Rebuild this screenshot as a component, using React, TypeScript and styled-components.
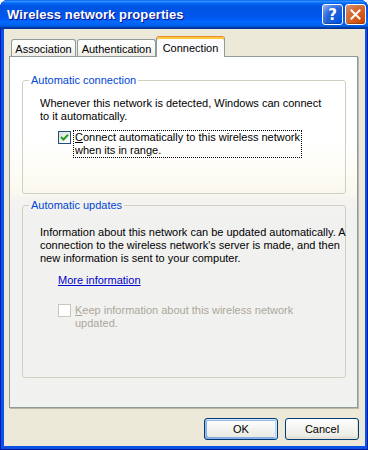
import styled, { createGlobalStyle } from "styled-components";

const GlobalStyle = createGlobalStyle`
  html, body {
    margin: 0;
    padding: 0;
    background: #ffffff;
  }
  body {
    font-family: "Liberation Sans", Arial, sans-serif;
    font-size: 11px;
    color: #000;
  }
`;

const Window = styled.div`
  width: 368px;
  height: 450px;
  box-sizing: border-box;
  display: flex;
  flex-direction: column;
  background: #0a52e6;
  border-radius: 8px 8px 0 0;
  overflow: hidden;
  box-shadow: inset 1px 0 #0019b5, inset -1px 0 #001ea0, inset 0 -1px #00138c;
`;

const TitleBar = styled.div`
  height: 29px;
  flex: none;
  display: flex;
  align-items: center;
  padding: 0 2px 0 7px;
  gap: 2px;
  background: linear-gradient(
    180deg,
    #0058ee 0%,
    #3593ff 4%,
    #288eff 6%,
    #127dff 8%,
    #036ffc 10%,
    #0262ee 14%,
    #0057e5 20%,
    #0054e3 24%,
    #0055eb 56%,
    #005bf5 66%,
    #026afe 76%,
    #0062ef 86%,
    #0052d6 92%,
    #0040ab 94%,
    #003092 100%
  );
`;

const Title = styled.span`
  flex: 1;
  font-family: "Liberation Sans", Arial, sans-serif;
  font-weight: 700;
  font-size: 13px;
  color: #fff;
  letter-spacing: 0.1px;
  text-shadow: 1px 1px #0f1089;
`;

const CaptionButton = styled.div<{ $kind: "help" | "close" }>`
  width: 21px;
  height: 21px;
  box-sizing: border-box;
  border: 1px solid #fff;
  border-radius: 3px;
  display: flex;
  align-items: center;
  justify-content: center;
  color: #fff;
  font-family: "DejaVu Sans", sans-serif;
  font-weight: 700;
  font-size: 15px;
  background: ${({ $kind }) =>
    $kind === "close"
      ? "radial-gradient(circle at 90% 90%, #cc4600 0%, #dc6527 55%, #cd7546 70%, #e39374 100%)"
      : "radial-gradient(circle at 90% 90%, #0054e9 0%, #2263d5 55%, #4479e4 70%, #a3bbec 100%)"};
  box-shadow: inset 0 -1px 1px rgba(0, 0, 0, 0.25);
`;

const Body = styled.div`
  flex: 1;
  display: flex;
  flex-direction: column;
  margin: 0 3px 4px 4px;
  padding: 7px 6px 6px 5px;
  background: #ece9d8;
`;

const TabStrip = styled.div`
  height: 20px;
  display: flex;
  align-items: flex-end;
  padding-left: 2px;
  position: relative;
  z-index: 1;
`;

const Tab = styled.div<{ $width: number; $active?: boolean }>`
  width: ${({ $width }) => $width}px;
  box-sizing: border-box;
  display: flex;
  align-items: center;
  justify-content: center;
  border: 1px solid #919b9c;
  border-bottom: none;
  border-radius: 3px 3px 0 0;
  margin-left: ${({ $active }) => ($active ? 0 : 1)}px;
  &:first-child {
    margin-left: 0;
  }
  ${({ $active }) =>
    $active
      ? `
    height: 21px;
    margin-bottom: -1px;
    padding-top: 2px;
    background: #fcfcfe;
    border-top-color: #e68b2c;
    box-shadow: inset 0 2px #ffc83c;
  `
      : `
    height: 17px;
    padding-top: 1px;
    background: linear-gradient(180deg, #ffffff 0%, #f7f7f5 60%, #ecebe5 100%);
  `}
`;

const Page = styled.div`
  height: 352px;
  box-sizing: border-box;
  margin-right: 1px;
  border: 1px solid #919b9c;
  box-shadow: 1px 1px 0 #b9b7aa;
  padding: 17px 11px 0 12px;
  display: flex;
  flex-direction: column;
  gap: 5px;
  background: linear-gradient(
    180deg,
    #ffffff 0%,
    #ffffff 24%,
    #fdfcf6 32%,
    #fbf9ef 38%,
    #f4f3f0 41%,
    #f1f1f0 46%,
    #f1f1f0 100%
  );
`;

const Group = styled.fieldset<{ $height: number; $top: number }>`
  margin: 0;
  height: ${({ $height }) => $height}px;
  box-sizing: border-box;
  border: 1px solid #d0d0bf;
  border-radius: 3px;
  padding: ${({ $top }) => $top}px 8px 0 17px;
  min-width: 0;
`;

const Legend = styled.legend`
  margin-left: -11px;
  padding: 0 2px;
  line-height: 13px;
  color: #0046d5;
`;

const Text = styled.p`
  margin: 0;
  line-height: 13px;
  white-space: nowrap;
`;

const CheckRow = styled.div<{ $gap: number }>`
  display: flex;
  align-items: flex-start;
  margin-top: ${({ $gap }) => $gap}px;
  padding-left: 18px;
`;

const Box = styled.div<{ $disabled?: boolean }>`
  width: 13px;
  height: 13px;
  flex: none;
  box-sizing: border-box;
  margin-top: 1px;
  border: 1px solid ${({ $disabled }) => ($disabled ? "#cac8bb" : "#1c5180")};
  background: ${({ $disabled }) =>
    $disabled ? "#ffffff" : "linear-gradient(135deg, #dcdcd7 0%, #ffffff 90%)"};
  display: flex;
  align-items: center;
  justify-content: center;
`;

const Label = styled.span<{ $focused?: boolean; $disabled?: boolean }>`
  margin-left: 2px;
  padding: 0 1px 0 1px;
  line-height: 13px;
  white-space: nowrap;
  border: 1px ${({ $focused }) => ($focused ? "dotted #000" : "solid transparent")};
  color: ${({ $disabled }) => ($disabled ? "#aca899" : "#000")};
`;

const Link = styled.a`
  display: block;
  margin-top: 9px;
  margin-left: 18px;
  line-height: 13px;
  color: #0000cc;
  text-decoration: underline;
  cursor: pointer;
`;

const ButtonRow = styled.div`
  display: flex;
  justify-content: flex-end;
  gap: 7px;
  margin-top: 10px;
`;

const Button = styled.button<{ $default?: boolean }>`
  width: 74px;
  height: 22px;
  box-sizing: border-box;
  padding: 0;
  border: 1px solid #003c74;
  border-radius: 3px;
  font-family: "Liberation Sans", Arial, sans-serif;
  font-size: 11px;
  color: #000;
  background: linear-gradient(180deg, #ffffff 0%, #f3f3ef 50%, #ecebe6 86%, #d6d0c5 100%);
  box-shadow: ${({ $default }) =>
    $default
      ? "inset -1px 1px #cee7ff, inset 1px 2px #98b8ea, inset -2px 0 #bcd4f6, inset 1px -1px #89ade4, inset 2px -2px #89ade4"
      : "inset -1px -1px #e3e1d6"};
`;

function CloseGlyph() {
  return (
    <svg width="11" height="11" viewBox="0 0 11 11">
      <path d="M1.5 1.5 L9.5 9.5 M9.5 1.5 L1.5 9.5" stroke="#fff" strokeWidth="2" strokeLinecap="square" />
    </svg>
  );
}

function CheckGlyph() {
  return (
    <svg width="9" height="9" viewBox="0 0 9 9">
      <path d="M1 4 L3.5 6.5 L8 1.8" fill="none" stroke="#21a121" strokeWidth="2" />
    </svg>
  );
}

export default function App() {
  return (
    <>
      <GlobalStyle />
      <Window>
        <TitleBar>
          <Title>Wireless network properties</Title>
          <CaptionButton $kind="help">?</CaptionButton>
          <CaptionButton $kind="close">
            <CloseGlyph />
          </CaptionButton>
        </TitleBar>
        <Body>
          <TabStrip>
            <Tab $width={65}>Association</Tab>
            <Tab $width={79}>Authentication</Tab>
            <Tab $width={69} $active>
              Connection
            </Tab>
          </TabStrip>
          <Page>
            <Group $height={120} $top={10}>
              <Legend>Automatic connection</Legend>
              <Text>
                Whenever this network is detected, Windows can connect
                <br />
                to it automatically.
              </Text>
              <CheckRow $gap={7}>
                <Box>
                  <CheckGlyph />
                </Box>
                <Label $focused>
                  <u>C</u>onnect automatically to this wireless network
                  <br />
                  when its in range.
                </Label>
              </CheckRow>
            </Group>
            <Group $height={179} $top={14}>
              <Legend>Automatic updates</Legend>
              <Text>
                Information about this network can be updated automatically. A
                <br />
                connection to the wireless network&apos;s server is made, and then
                <br />
                new information is sent to your computer.
              </Text>
              <Link>More information</Link>
              <CheckRow $gap={16}>
                <Box $disabled />
                <Label $disabled>
                  <u>K</u>eep information about this wireless network
                  <br />
                  updated.
                </Label>
              </CheckRow>
            </Group>
          </Page>
          <ButtonRow>
            <Button $default>OK</Button>
            <Button>Cancel</Button>
          </ButtonRow>
        </Body>
      </Window>
    </>
  );
}
